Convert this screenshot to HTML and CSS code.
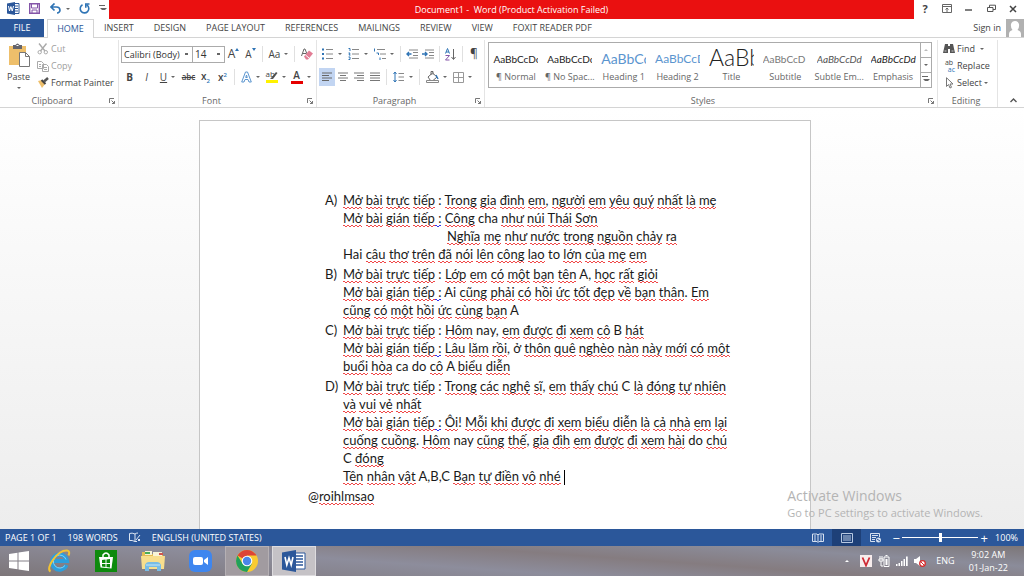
FILE: index.html
```html
<!DOCTYPE html>
<html lang="en">
<head>
    <meta charset="UTF-8">
    <meta name="viewport" content="width=device-width, initial-scale=1.0">
    <title>Document1 - Word</title>
    <link rel="stylesheet" href="styles.css">
</head>
<body>
    <header class="titlebar">
        <div class="quick-access">
            <svg class="app-logo" width="13" height="13" viewBox="0 0 13 13"><path d="M7 1.500h5v10H7z" fill="#fff" stroke="#2b579a"/><path d="M8 4h3M8 6.500h3M8 9h3" stroke="#2b579a"/><path d="M0 1.500 8 0v13L0 11.500z" fill="#2b579a"/><path d="m1.500 4 1 5 1.400-4.500L5.200 9l1.300-5" fill="none" stroke="#fff"/></svg>
            <button aria-label="Save"><svg width="11" height="11" viewBox="0 0 11 11"><path d="M.7.700h9.600v9.600H.7z" fill="#fff" stroke="#8455a8" stroke-width="1.400"/><path d="M2.500 1v4h6V1M3 10V7h5v3" fill="none" stroke="#8455a8"/></svg></button>
            <button class="split" aria-label="Undo"><svg width="12" height="11" viewBox="0 0 12 11"><path d="M4.500.500 1 4l3.500 3.500M1 4h5.500C11 4 11 10 7 10" fill="none" stroke="#2f74b5" stroke-width="1.700"/></svg><i class="caret"></i></button>
            <button aria-label="Redo"><svg width="11" height="11" viewBox="0 0 11 11"><path d="M3.500 1.800a4.300 4.300 0 1 0 4.500.300M10.500 1H6.800v3.800" fill="none" stroke="#2f74b5" stroke-width="1.600"/></svg></button>
            <button class="more" aria-label="Customize toolbar"><i class="caret over"></i></button>
        </div>
        <h1>Document1 -&nbsp; Word (Product Activation Failed)</h1>
        <div class="window-buttons">
            <button aria-label="Help"><b>?</b></button>
            <button aria-label="Ribbon display options"><svg width="10" height="9" viewBox="0 0 10 9"><path d="M.500.500h9v8h-9zM.500 2.500h9M5 8V4M3.500 5.500 5 4l1.500 1.500" fill="none" stroke="#666"/></svg></button>
            <button aria-label="Minimize"><svg width="8" height="8" viewBox="0 0 8 8"><path d="M0 5h7" stroke="#555" stroke-width="1.500"/></svg></button>
            <button aria-label="Restore"><svg width="9" height="9" viewBox="0 0 9 9"><path d="M.500 3.500h5.500v4H.500zM2.500 3V1.200h6v4.300H6" fill="none" stroke="#555"/></svg></button>
            <button aria-label="Close"><svg width="8" height="8" viewBox="0 0 8 8"><path d="m1 1 6 6M7 1 1 7" stroke="#444" stroke-width="1.500"/></svg></button>
        </div>
    </header>

    <nav class="tabs">
        <a class="file" href="#file">FILE</a>
        <a class="active" href="#home">HOME</a>
        <a href="#insert">INSERT</a>
        <a href="#design">DESIGN</a>
        <a href="#layout">PAGE LAYOUT</a>
        <a href="#references">REFERENCES</a>
        <a href="#mailings">MAILINGS</a>
        <a href="#review">REVIEW</a>
        <a href="#view">VIEW</a>
        <a href="#foxit">FOXIT READER PDF</a>
        <a class="sign-in" href="#signin">Sign in <svg width="18" height="18" viewBox="0 0 18 18"><path d="M0 0h18v18H0z" fill="#b1b1b1"/><path d="M3 18v-3q0-3 3.500-4Q4.500 9 5 5q1-3 4-3t4 3q.500 4-1.500 6 3.500 1 3.500 4v3z" fill="#fff"/></svg></a>
    </nav>

    <section class="ribbon">
        <div class="group clipboard">
            <div class="tools">
                <button class="paste">
                    <svg width="22" height="24" viewBox="0 0 22 24"><path d="M1 3h17v19H1z" fill="#eebf6b"/><path d="M5 2h2.500Q9.500-1 11.500 2H14v4H5z" fill="#64646c"/><path d="M8.500 2.500h2" stroke="#fff"/><path d="M11.500 9.500h6l4 4v10h-10z" fill="#fff" stroke="#777"/><path d="M17.500 9.500v4h4" fill="none" stroke="#777"/></svg>
                    Paste
                    <i class="caret"></i>
                </button>
                <div class="stack">
                    <button class="off"><svg width="12" height="12" viewBox="0 0 12 12"><path d="M2 .500 8 8M9.500.500 3.500 8" stroke="#aaa" stroke-width="1.400"/><circle cx="2.700" cy="9.200" r="1.700" fill="none" stroke="#aaa"/><circle cx="8.800" cy="9.200" r="1.700" fill="none" stroke="#aaa"/></svg>Cut</button>
                    <button class="off"><svg width="12" height="12" viewBox="0 0 12 12"><path d="M.500 1.500h4l2 2v5h-6zM5.500 4.500h4l2 2v5h-6z" fill="#fff" stroke="#aaa"/><path d="M2 4.500h2M2 6.500h2M7 7.500h3M7 9.500h3" stroke="#aaa"/></svg>Copy</button>
                    <button><svg width="12" height="12" viewBox="0 0 12 12"><path d="m1 4 4-1 3 4-3 4z" fill="#eebf6b"/><path d="m4.500 3 4 4" stroke="#444" stroke-width="2"/><path d="m7 4.500 4-3.500" stroke="#555" stroke-width="2.500"/></svg>Format Painter</button>
                </div>
            </div>
            <h2>Clipboard</h2>
            <button class="launcher" aria-label="Clipboard options"><svg width="6" height="6" viewBox="0 0 6 6"><path d="M.500 5V.500H5M2.500 2.500l3 3M5.500 3v2.500H3" fill="none" stroke="#777"/></svg></button>
        </div>

        <div class="group font">
            <div class="tools rows">
                <div class="row">
                    <select class="family" aria-label="Font"><option>Calibri (Body)</option></select>
                    <select class="size" aria-label="Font size"><option>14</option></select>
                    <button class="grow" aria-label="Grow font">A<svg width="4" height="3" viewBox="0 0 4 3"><path d="m0 3 2-3 2 3z" fill="#2f74b5"/></svg></button>
                    <button class="shrink" aria-label="Shrink font">A<svg width="4" height="3" viewBox="0 0 4 3"><path d="m0 0 2 3 2-3z" fill="#2f74b5"/></svg></button>
                    <hr>
                    <button class="split case">Aa<i class="caret"></i></button>
                    <hr>
                    <button aria-label="Clear formatting"><svg width="12" height="12" viewBox="0 0 12 12"><path d="M.500 8 3 1h1l2 5M1.500 5.500H5" fill="none" stroke="#666"/><path d="m3 8.500 5-6 4 3-5 6H5z" fill="#e27d95"/><path d="m4.500 7 3.500 3" stroke="#fff"/></svg></button>
                </div>
                <div class="row">
                    <button><b>B</b></button>
                    <button><em>I</em></button>
                    <button class="split"><ins>U</ins><i class="caret"></i></button>
                    <button><s>abc</s></button>
                    <button class="script"><span>x<sub>2</sub></span></button>
                    <button class="script"><span>x<sup>2</sup></span></button>
                    <hr>
                    <button class="split" aria-label="Text effects"><svg width="11" height="12" viewBox="0 0 11 12"><path d="M.700 11 4.500 1h2l3.800 10H8L7 8.500H4L3 11zM4.700 6.500h1.600L5.500 4z" fill="#fff" stroke="#5b95cf"/></svg><i class="caret"></i></button>
                    <button class="split" aria-label="Highlight"><span class="highlight"><svg width="12" height="12" viewBox="0 0 12 12"><path d="M0 9h12v3H0z" fill="#fff200"/><path d="m5 7 5-6 1.500 1L7 8H4z" fill="#555"/></svg><small>ab</small></span><i class="caret"></i></button>
                    <button class="split" aria-label="Font color"><span class="font-color">A</span><i class="caret"></i></button>
                </div>
            </div>
            <h2>Font</h2>
            <button class="launcher" aria-label="Font options"><svg width="6" height="6" viewBox="0 0 6 6"><path d="M.500 5V.500H5M2.500 2.500l3 3M5.500 3v2.500H3" fill="none" stroke="#777"/></svg></button>
        </div>

        <div class="group paragraph">
            <div class="tools rows">
                <div class="row">
                    <button class="split" aria-label="Bullets"><svg width="12" height="12" viewBox="0 0 12 12"><path d="M0 1.500h2M0 6h2M0 10.500h2" stroke="#2f74b5" stroke-width="2"/><path d="M4 1.500h7M4 6h7M4 10.500h7" stroke="#888"/></svg><i class="caret"></i></button>
                    <button class="split" aria-label="Numbering"><svg width="12" height="12" viewBox="0 0 12 12"><path d="M.500.500H2v2.500M.500 5H2l-1 2h1.500M.500 9H2v2.500H.500" fill="none" stroke="#2f74b5"/><path d="M4 1.500h7M4 6h7M4 10.500h7" stroke="#888"/></svg><i class="caret"></i></button>
                    <button class="split" aria-label="Multilevel list"><svg width="12" height="12" viewBox="0 0 12 12"><path d="M.500.500v3M2.500 5h2v2M6 9.500v2.500" fill="none" stroke="#2f74b5"/><path d="M3 1.500h8M6 6h6M8 10.500h4" stroke="#888"/></svg><i class="caret"></i></button>
                    <hr>
                    <button aria-label="Decrease indent"><svg width="12" height="10" viewBox="0 0 12 10"><path d="M3 1h9M7 3.500h5M7 6.500h5M3 9h9" stroke="#888"/><path d="M5.500 5H1M3 3 1 5l2 2" fill="none" stroke="#2f74b5" stroke-width="1.400"/></svg></button>
                    <button aria-label="Increase indent"><svg width="12" height="10" viewBox="0 0 12 10"><path d="M3 1h9M7 3.500h5M7 6.500h5M3 9h9" stroke="#888"/><path d="M0 5h5M3 3l2 2-2 2" fill="none" stroke="#2f74b5" stroke-width="1.400"/></svg></button>
                    <hr>
                    <button aria-label="Sort"><svg width="12" height="13" viewBox="0 0 12 13"><path d="M.500 5.500 2.500.500l2 5M1 4h3" fill="none" stroke="#2f74b5"/><path d="M.500 7.500h4l-4 4.500h4" fill="none" stroke="#8455a8"/><path d="M8.500 1v10M6.500 9l2 2.500 2-2.500" fill="none" stroke="#666"/></svg></button>
                    <hr>
                    <button class="pilcrow" aria-label="Show marks">¶</button>
                </div>
                <div class="row">
                    <button class="pressed" aria-label="Align left"><svg width="12" height="10" viewBox="0 0 12 10"><path d="M1 1h10M1 3.500h7M1 6h10M1 8.500h7" stroke="#666"/></svg></button>
                    <button aria-label="Center"><svg width="12" height="10" viewBox="0 0 12 10"><path d="M1 1h10M3 3.500h6M1 6h10M3 8.500h6" stroke="#777"/></svg></button>
                    <button aria-label="Align right"><svg width="12" height="10" viewBox="0 0 12 10"><path d="M1 1h10M4 3.500h7M1 6h10M4 8.500h7" stroke="#777"/></svg></button>
                    <button aria-label="Justify"><svg width="12" height="10" viewBox="0 0 12 10"><path d="M1 1h10M1 3.500h10M1 6h10M1 8.500h10" stroke="#777"/></svg></button>
                    <hr>
                    <button class="split" aria-label="Line spacing"><svg width="12" height="12" viewBox="0 0 12 12"><path d="M2 1v10M.500 3 2 1l1.500 2M.500 9 2 11l1.500-2" fill="none" stroke="#2f74b5"/><path d="M5.500 2.500H11M5.500 6H11M5.500 9.500H11" stroke="#888"/></svg><i class="caret"></i></button>
                    <hr>
                    <button class="split" aria-label="Shading"><svg width="13" height="12" viewBox="0 0 13 12"><path d="m2 6 4.500-4L11 6l-4 3.500H4.500zM5 4V.500h2v3" fill="#fff" stroke="#666"/><path d="m10 4 2 4" stroke="#2f74b5" stroke-width="1.400"/><path d="M.500 9.500h12v2H.500z" fill="#fff" stroke="#888"/></svg><i class="caret"></i></button>
                    <button class="split" aria-label="Borders"><svg width="11" height="11" viewBox="0 0 11 11"><path d="M.500.500h10v10H.500zM5.500 1v9M1 5.500h9" fill="none" stroke="#999"/></svg><i class="caret"></i></button>
                </div>
            </div>
            <h2>Paragraph</h2>
            <button class="launcher" aria-label="Paragraph options"><svg width="6" height="6" viewBox="0 0 6 6"><path d="M.500 5V.500H5M2.500 2.500l3 3M5.500 3v2.500H3" fill="none" stroke="#777"/></svg></button>
        </div>

        <div class="group styles">
            <div class="tools">
                <div class="gallery">
                    <button><span class="sample">AaBbCcDc</span>¶ Normal</button>
                    <button><span class="sample">AaBbCcDc</span>¶ No Spac...</button>
                    <button><span class="sample heading1">AaBbCc</span>Heading 1</button>
                    <button><span class="sample heading2">AaBbCcD</span>Heading 2</button>
                    <button><span class="sample title">AaBb</span>Title</button>
                    <button><span class="sample subtitle">AaBbCcD</span>Subtitle</button>
                    <button><span class="sample subtle">AaBbCcDd</span>Subtle Em...</button>
                    <button><span class="sample emphasis">AaBbCcDd</span>Emphasis</button>
                    <div class="scroller">
                        <button aria-label="Previous row" disabled><i class="caret up"></i></button>
                        <button aria-label="Next row"><i class="caret"></i></button>
                        <button aria-label="More styles"><i class="caret over"></i></button>
                    </div>
                </div>
            </div>
            <h2>Styles</h2>
            <button class="launcher" aria-label="Style options"><svg width="6" height="6" viewBox="0 0 6 6"><path d="M.500 5V.500H5M2.500 2.500l3 3M5.500 3v2.500H3" fill="none" stroke="#777"/></svg></button>
        </div>

        <div class="group editing">
            <div class="tools">
                <div class="stack">
                    <button><svg width="12" height="11" viewBox="0 0 12 11"><path d="M2 1h3v2h2V1h3l2 9H7V6H5v4H0z" fill="#555"/><path d="M1.500 8h2M8.500 8h2" stroke="#ccc"/></svg>Find <i class="caret far"></i></button>
                    <button><span class="swap"><small>ab</small><small>ac</small></span>Replace</button>
                    <button><svg width="12" height="12" viewBox="0 0 12 12"><path d="M3.500.700v8.800l2-2L7 11l1.500-.700L7 7h3z" fill="#fff" stroke="#777"/></svg>Select<i class="caret"></i></button>
                </div>
            </div>
            <h2>Editing</h2>
        </div>
        <button class="collapse" aria-label="Collapse the ribbon"><svg width="7" height="5" viewBox="0 0 7 5"><path d="m.500 4 3-3 3 3" fill="none" stroke="#555" stroke-width="1.400"/></svg></button>
    </section>

    <main class="workspace">
        <article class="page" lang="vi">
            <ol>
                <li>
                    <span class="letter">A)</span>
                    <div>
                        <p><u>Mở</u> <u>bài</u> <u>trực</u> <u>tiếp</u> : <u>Trong</u> <u>gia</u> <u>đình</u> <u>em</u>, <u>người</u> <u>em</u> <u>yêu</u> <u>quý</u> <u>nhất</u> <u>là</u> <u>mẹ</u></p>
                        <p><u>Mở</u> <u>bài</u> <u>gián</u> <u>tiếp</u><u class="grammar"> :</u> <u>Công</u> cha <u>như</u> <u>núi</u> <u>Thái</u> <u>Sơn</u></p>
                        <p class="verse"><u>Nghĩa</u> <u>mẹ</u> <u>như</u> <u>nước</u> <u>trong</u> <u>nguồn</u> <u>chảy</u> <u>ra</u></p>
                        <p>Hai <u>câu</u> <u>thơ</u> <u>trên</u> <u>đã</u> <u>nói</u> <u>lên</u> <u>công</u> <u>lao</u> to <u>lớn</u> <u>của</u> <u>mẹ</u> <u>em</u></p>
                    </div>
                </li>
                <li>
                    <span class="letter">B)</span>
                    <div>
                        <p><u>Mở</u> <u>bài</u> <u>trực</u> <u>tiếp</u> : <u>Lớp</u> <u>em</u> <u>có</u> <u>một</u> <u>bạn</u> <u>tên</u> A, <u>học</u> <u>rất</u> <u>giỏi</u></p>
                        <p><u>Mở</u> <u>bài</u> <u>gián</u> <u>tiếp</u><u class="grammar"> :</u> Ai <u>cũng</u> <u>phải</u> <u>có</u> <u>hồi</u> <u>ức</u> <u>tốt</u> <u>đẹp</u> <u>về</u> <u>bạn</u> <u>thân</u>. <u>Em</u><br>
                        <u>cũng</u> <u>có</u> <u>một</u> <u>hồi</u> <u>ức</u> <u>cùng</u> <u>bạn</u> A</p>
                    </div>
                </li>
                <li>
                    <span class="letter">C)</span>
                    <div>
                        <p><u>Mở</u> <u>bài</u> <u>trực</u> <u>tiếp</u> : <u>Hôm</u> nay, <u>em</u> <u>được</u> <u>đi</u> <u>xem</u> <u>cô</u> B <u>hát</u></p>
                        <p><u>Mở</u> <u>bài</u> <u>gián</u> <u>tiếp</u><u class="grammar"> :</u> <u>Lâu</u> <u>lăm</u> <u>rồi</u>, ở <u>thôn</u> <u>quê</u> <u>nghèo</u> <u>nàn</u> <u>này</u> <u>mới</u> <u>có</u> <u>một</u><br>
                        <u>buổi</u> <u>hòa</u> ca do <u>cô</u> A <u>biểu</u> <u>diễn</u></p>
                    </div>
                </li>
                <li>
                    <span class="letter">D)</span>
                    <div>
                        <p><u>Mở</u> <u>bài</u> <u>trực</u> <u>tiếp</u> : <u>Trong</u> <u>các</u> <u>nghệ</u> <u>sĩ</u>, <u>em</u> <u>thấy</u> <u>chú</u> C <u>là</u> <u>đóng</u> <u>tự</u> <u>nhiên</u><br>
                        <u>và</u> <u>vui</u> <u>vẻ</u> <u>nhất</u></p>
                        <p><u>Mở</u> <u>bài</u> <u>gián</u> <u>tiếp</u><u class="grammar"> :</u> <u>Ôi</u>! <u>Mỗi</u> <u>khi</u> <u>được</u> <u>đi</u> <u>xem</u> <u>biểu</u> <u>diễn</u> <u>là</u> <u>cả</u> <u>nhà</u> <u>em</u> <u>lại</u><br>
                        <u>cuống</u> <u>cuồng</u>. <u>Hôm</u> nay <u>cũng</u> <u>thế</u>, <u>gia</u> <u>đìh</u> <u>em</u> <u>được</u> <u>đi</u> <u>xem</u> <u>hài</u> do <u>chú</u><br>
                        C <u>đóng</u></p>
                        <p><u>Tên</u> <u>nhân</u> <u>vật</u> A,B,C <u>Bạn</u> <u>tự</u> <u>điền</u> <u>vô</u> <u>nhé</u> <span class="cursor"></span></p>
                    </div>
                </li>
            </ol>
            <p>@<u>roihlmsao</u></p>
        </article>
        <div class="watermark">
            <strong>Activate Windows</strong>
            <span>Go to PC settings to activate Windows.</span>
        </div>
    </main>

    <div class="statusbar">
        <span>PAGE 1 OF 1</span>
        <span>198 WORDS</span>
        <svg width="12" height="11" viewBox="0 0 12 11"><path d="M6 2Q3 .500.500 1.500v7Q3 8 6 9.500zM6 2q1-1 3-1M6 9.500h2" fill="none" stroke="#dde6f3"/><path d="m7 8 4-5M9 7l2 2M11 7 9 9" stroke="#dde6f3"/></svg>
        <span>ENGLISH (UNITED STATES)</span>
        <div class="views">
            <button aria-label="Read mode"><svg width="12" height="10" viewBox="0 0 12 10"><path d="M.500 1H5l1 1 1-1h4.500v7.500H7l-1 1-1-1H.500zM6 2v7M2 3h2M2 5h2M2 7h2M8 3h2M8 5h2M8 7h2" fill="none" stroke="#d5e0f0"/></svg></button>
            <button class="current" aria-label="Print layout"><svg width="12" height="10" viewBox="0 0 12 10"><path d="M.500.500h11v9H.500zM2 3h8M2 5h8M2 7h8" fill="none" stroke="#b8c9e3"/></svg></button>
            <button aria-label="Web layout"><svg width="12" height="10" viewBox="0 0 12 10"><path d="M5 8.500H.500v-8h9V4M2 2.500h6M2 4.500h4M2 6.500h3" fill="none" stroke="#d5e0f0"/><circle cx="8.500" cy="7" r="2.500" fill="#d5e0f0"/><path d="m7 6 3 2" stroke="#2b579a"/></svg></button>
        </div>
        <div class="zoom">
            <button aria-label="Zoom out">−</button>
            <input type="range" min="0" max="100" value="50" aria-label="Zoom">
            <button aria-label="Zoom in">+</button>
        </div>
        <span>100%</span>
    </div>

    <footer class="taskbar">
        <button class="start" aria-label="Start"><svg width="20" height="20" viewBox="0 0 20 20"><path d="m0 3 8.500-1.200v7.700H0zM9.500 1.600 20 0v9.500H9.500zM0 10.500h8.500v7.700L0 17zM9.500 10.500H20V20L9.500 18.400z" fill="#fff"/></svg></button>
        <button aria-label="Internet Explorer"><svg width="24" height="24" viewBox="0 0 24 24"><path d="M19.500 16A7.500 7.500 0 1 1 20 12H6" fill="none" stroke="#2d9fdd" stroke-width="4"/><path d="M18 16.500A6.500 6.500 0 1 1 19 10.500" fill="none" stroke="#83d4f7"/><path d="M3.500 22.500C-2 20 10 1 20 1.500q3.500.500 1.500 5" fill="none" stroke="#f2c335" stroke-width="2"/></svg></button>
        <button aria-label="Store"><svg width="22" height="22" viewBox="0 0 22 22"><path d="M0 0h22v22H0z" fill="#0d8a0d"/><path d="M4 7h14l-1.500 11.500-11-1z" fill="#fff"/><path d="M8 8V5q3-4 6 0v3" fill="none" stroke="#fff" stroke-width="1.500"/><path d="m7 10 3.500-.500V13H7zM11.500 9.400 15 9v4h-3.500zM7 14h3.500v3L7 16.500zM11.500 14H15v3.500l-3.500-.400z" fill="#0d8a0d"/></svg></button>
        <button aria-label="File Explorer"><svg width="24" height="22" viewBox="0 0 24 22"><path d="M1 2h8l1 2h12v15H1z" fill="#e4bd55"/><path d="M4 1h7v4H4zM12 2h9v4h-9z" fill="#f7f4d8"/><path d="M4 3h5" stroke="#4bad57" stroke-width="2"/><path d="M18 4h4" stroke="#d3554d" stroke-width="2"/><path d="M0 6h24l-1 13H1z" fill="#f8de8d"/><path d="M4 21v-6q1-3 4-3h8q3 0 4 3v6h-4v-4H8v4z" fill="#79bce5"/><path d="M5 15h14" stroke="#c5e8fa"/></svg></button>
        <button aria-label="Zoom meetings"><svg width="23" height="22" viewBox="0 0 23 22"><rect width="23" height="22" rx="6" fill="#3e86ef"/><rect x="4" y="7" width="10" height="8" rx="2" fill="#fff"/><path d="m15 10 4-3v8l-4-3z" fill="#fff"/></svg></button>
        <button class="open" aria-label="Chrome"><svg width="22" height="22" viewBox="0 0 22 22"><circle cx="11" cy="11" r="11" fill="#f9cb31"/><path d="M11 11 1.500 5.500A11 11 0 0 1 20.500 5.500H11z" fill="#dd4437"/><path d="M1.500 5.500A11 11 0 0 0 11 22l5-8.500H6.500z" fill="#21a05c"/><circle cx="11" cy="11" r="5.300" fill="#fff"/><circle cx="11" cy="11" r="4.200" fill="#4a86e8"/></svg></button>
        <button class="open focused" aria-label="Word"><svg width="24" height="22" viewBox="0 0 24 22"><path d="M12 3h11v16H12z" fill="#fff" stroke="#2b579a"/><path d="M14 6h7M14 9h7M14 12h7M14 15h7" stroke="#2b579a" stroke-width="1.400"/><path d="M0 2.500 14 0v22L0 19.500z" fill="#2b579a"/><path d="m3 7 1.800 8L7 8l2.200 7L11 7" fill="none" stroke="#fff" stroke-width="1.600"/></svg></button>
        <div class="tray">
            <i class="caret up"></i>
            <svg width="12" height="12" viewBox="0 0 12 12"><path d="M0 0h12v12H0z" fill="#f7eded"/><path d="m2.500 2.500 3.500 8 3.500-8" fill="none" stroke="#cf2a35" stroke-width="1.800"/></svg>
            <svg width="12" height="12" viewBox="0 0 12 12"><path d="M6 2h5v9.500H6zM7.500.500h2M2 1v3M4 1v3M1 4h4v2H1zM3 6v5h2" fill="none" stroke="#fff"/><path d="M7.500 4h2v6h-2z" fill="#fff"/></svg>
            <svg width="12" height="12" viewBox="0 0 12 12"><path d="M0 11V9h1.500v2zM2.500 11V8H4v3zM5 11V6h1.500v5zM7.500 11V4H9v7zM10 11V1.500h1.700V11z" fill="#fff"/></svg>
            <svg width="12" height="12" viewBox="0 0 12 12"><path d="M0 4h2l4-3v10L2 8H0z" fill="#fff"/><circle cx="8.500" cy="8.500" r="2.800" fill="#fff" stroke="#d82b2b" stroke-width="1.300"/><path d="m6.700 6.700 3.600 3.600" stroke="#d82b2b"/></svg>
            <span class="lang">ENG</span>
            <time>9:02 AM<br>01-Jan-22</time>
        </div>
    </footer>
</body>
</html>
```
FILE: styles.css
```css
:root {
    --word-blue: #2b579a;
    --text: #444444;
    --line: #d4d4d4;
    --squiggle: #f04848;
}

* {
    margin: 0;
    padding: 0;
    box-sizing: border-box;
}

body {
    display: flex;
    flex-direction: column;
    height: 100vh;
    overflow: hidden;
    background: #ffffff;
    color: var(--text);
    font: 9px/12px "Open Sans", "Noto Sans", sans-serif;
}

button {
    display: flex;
    align-items: center;
    justify-content: center;
    background: none;
    border: none;
    color: inherit;
    font: inherit;
    white-space: nowrap;
}

a {
    color: inherit;
    text-decoration: none;
}

svg {
    flex: none;
}

.caret {
    flex: none;
    border: 2px solid transparent;
    border-top-color: #666666;
    border-bottom: 0;
}

.caret.up {
    border-top: 0;
    border-bottom: 2px solid #bbbbbb;
}

.caret.over::before {
    content: "";
    display: block;
    width: 6px;
    margin: -5px 0 4px -3px;
    border-top: 1px solid #666666;
}

/* Title bar */
.titlebar {
    display: flex;
    flex: none;
    height: 19px;
}

.quick-access {
    display: flex;
    align-items: center;
    width: 109px;
    padding: 0 2px 2px 7px;
}

.quick-access .app-logo {
    margin-right: 9px;
}

.quick-access .split {
    width: 30px;
    gap: 4px;
    margin: 0 8px;
}

.quick-access .more {
    margin-left: 10px;
}

.titlebar h1 {
    flex: 1;
    background: #ea1010;
    color: #ffffff;
    font-size: 9px;
    font-weight: 400;
    line-height: 19px;
    text-align: center;
}

.window-buttons {
    display: flex;
    align-items: center;
    width: 110px;
    padding-bottom: 2px;
}

.window-buttons button {
    width: 22px;
    font-size: 11px;
}

/* Ribbon tabs */
.tabs {
    display: flex;
    flex: none;
    height: 19px;
    border-bottom: 1px solid var(--line);
    line-height: 18px;
}

.tabs a {
    padding: 0 10px;
    white-space: nowrap;
}

.tabs .file {
    width: 44px;
    margin-right: 3px;
    padding: 0;
    background: var(--word-blue);
    color: #ffffff;
    text-align: center;
}

.tabs .active {
    width: 47px;
    height: 19px;
    padding: 0;
    background: #ffffff;
    border: 1px solid var(--line);
    border-bottom: 0;
    color: var(--word-blue);
    line-height: 17px;
    text-align: center;
}

.tabs .sign-in {
    display: flex;
    gap: 5px;
    margin-left: auto;
    padding: 0;
}

/* Ribbon */
.ribbon {
    display: flex;
    flex: none;
    height: 70px;
    border-bottom: 1px solid var(--line);
}

.group {
    position: relative;
    display: flex;
    flex-direction: column;
    flex: none;
    margin-top: 2px;
    border-right: 1px solid #e4e4e4;
}

.group h2 {
    padding-right: 14px;
    color: #666666;
    font-size: 9px;
    font-weight: 400;
    text-align: center;
}

.launcher {
    position: absolute;
    right: 3px;
    bottom: 3px;
}

.tools {
    display: flex;
    flex: 1;
}

.stack button {
    justify-content: flex-start;
    gap: 2px;
    height: 17px;
}

.stack .off {
    color: #a0a0a0;
}

.clipboard {
    width: 119px;
}

.editing {
    width: 60px;
    padding-left: 5px;
}

.group.editing h2 {
    padding-right: 8px;
}

.font {
    width: 198px;
    padding-left: 2px;
}

.paragraph {
    width: 168px;
    padding-left: 2px;
}

.styles {
    flex: 1;
    padding: 0 5px 0 3px;
}

.paste {
    flex-direction: column;
    justify-content: flex-start;
    width: 37px;
    padding-top: 3px;
    gap: 4px;
}

.rows {
    flex-direction: column;
    gap: 5px;
    padding-top: 5px;
}

.row {
    display: flex;
    align-items: center;
    height: 18px;
}

.row button {
    flex: none;
    width: 16px;
    height: 18px;
    font-size: 10px;
}

.row .split {
    gap: 4px;
    width: 26px;
}

.font .row button {
    width: 17px;
}

.font .row .split {
    width: 25px;
}

.row hr {
    height: 16px;
    margin: 0 3px;
    border: none;
    border-left: 1px solid #e0e0e0;
}

.row select {
    height: 17px;
    padding: 0 2px;
    appearance: none;
    background: linear-gradient(#666666, #666666) no-repeat right 4px center / 3px 2px #ffffff;
    border: 1px solid #ababab;
    color: #333333;
    font: 9px "Open Sans", "Noto Sans", sans-serif;
}

.row .family {
    width: 72px;
}

.row .size {
    width: 33px;
    font-size: 10px;
    margin-left: -1px;
}

.font .row .grow {
    font-size: 12px;
}

.grow svg,
.shrink svg {
    align-self: flex-start;
    margin-top: 3px;
}

.row s {
    font-size: 8px;
    font-weight: 600;
}

.script {
    font-weight: 600;
}

.script sub,
.script sup {
    color: #2f74b5;
    font-size: 6px;
    line-height: 6px;
}

.highlight {
    position: relative;
    height: 12px;
}

.highlight small {
    position: absolute;
    left: 0;
    top: -3px;
    font-size: 8px;
}

.font-color {
    width: 12px;
    height: 14px;
    border-bottom: 3px solid #e60000;
    font-weight: 600;
    line-height: 11px;
}

.row .pilcrow {
    font-size: 12px;
}

.row .pressed {
    background: #c2d5f2;
}

.gallery {
    display: flex;
    flex: 1;
    height: 46px;
    margin-top: 2px;
    border: 1px solid #ababab;
}

.gallery > button {
    flex: 1;
    flex-direction: column;
    justify-content: flex-start;
    min-width: 0;
    color: #666666;
}

.sample {
    width: 45px;
    height: 28px;
    overflow: hidden;
    color: #222222;
    font: 10px/32px Lato, "Open Sans", sans-serif;
    text-align: left;
}

.heading1 {
    color: #5b95cf;
    font-size: 14px;
}

.heading2 {
    color: #5b95cf;
    font-size: 12px;
}

.title {
    font-size: 23px;
    font-weight: 300;
    line-height: 28px;
}

.subtitle {
    color: #777777;
}

.subtle {
    color: #555555;
    font-style: italic;
}

.emphasis {
    font-style: italic;
}

.scroller {
    display: flex;
    flex-direction: column;
    width: 11px;
    border-left: 1px solid #ababab;
}

.scroller button {
    flex: 1;
}

.scroller button + button {
    border-top: 1px solid #ababab;
}

.swap {
    display: flex;
    flex-direction: column;
    width: 12px;
}

.swap small {
    font-size: 7px;
    line-height: 7px;
}

.swap small + small {
    color: #2f74b5;
    text-align: right;
}

.far {
    margin-left: 3px;
}

.collapse {
    width: 26px;
    margin: auto 0 4px;
    padding-left: 4px;
}

/* Document */
.workspace {
    position: relative;
    flex: 1;
    min-height: 0;
    padding: 12px 14px 0 0;
    overflow: hidden;
    background: linear-gradient(#ffffff, #ededed);
}

.page {
    width: 612px;
    max-width: 100%;
    min-height: 792px;
    margin: 0 auto;
    padding: 70px 70px 0 108px;
    background: #ffffff;
    border: 1px solid #c6c6c6;
    color: #1a1a1a;
    font: 13px/18px Lato, "Open Sans", sans-serif;
    font-variant-ligatures: none;
    white-space: nowrap;
}

.page ol {
    padding-left: 17px;
    list-style: none;
}

.page li {
    display: grid;
    grid-template-columns: 18px 1fr;
    padding-bottom: 2px;
}

/* Spelling squiggle: two rows of dashes, the lower one shifted */
.page u {
    padding-bottom: 1px;
    text-decoration: none;
    background:
        repeating-linear-gradient(90deg, var(--squiggle) 0 2px, transparent 2px 4px) 0 calc(100% - 1px) / 100% 1px no-repeat,
        repeating-linear-gradient(90deg, transparent 0 2px, var(--squiggle) 2px 4px) 0 100% / 100% 1px no-repeat;
}

.page .grammar {
    --squiggle: #3333ee;
}

.verse {
    padding-left: 104px;
}

.cursor {
    display: inline-block;
    height: 15px;
    border-left: 1px solid #000000;
    vertical-align: middle;
}

.watermark {
    position: absolute;
    right: 41px;
    bottom: 8px;
    color: #b4b4b4;
    font-size: 11px;
    line-height: 16px;
}

.watermark strong {
    display: block;
    font-size: 14px;
    font-weight: 400;
    line-height: 18px;
}

/* Status bar */
.statusbar {
    display: flex;
    align-items: center;
    flex: none;
    gap: 11px;
    height: 17px;
    padding: 0 6px 0 5px;
    background: var(--word-blue);
    color: #ffffff;
}

.views {
    display: flex;
    height: 100%;
    margin-left: auto;
}

.views button {
    width: 29px;
}

.views .current {
    background: #1e4078;
}

.zoom {
    display: flex;
    align-items: center;
    gap: 2px;
    margin: 0 -4px 0 -9px;
}

.zoom button {
    width: 8px;
    font-size: 13px;
}

.zoom input {
    width: 76px;
    height: 9px;
    appearance: none;
    background: linear-gradient(#ffffff, #ffffff) no-repeat center / 100% 1px;
}

.zoom input::-webkit-slider-thumb {
    width: 3px;
    height: 9px;
    appearance: none;
    background: #ffffff;
}

/* Taskbar */
.taskbar {
    display: flex;
    flex: none;
    height: 30px;
    background: linear-gradient(4deg, #7d7679, #8d8d9c 40%, #857c80 60%, #8b8c9a 80%, #7c7678);
    color: #ffffff;
}

.taskbar button {
    width: 44px;
    margin-right: 3px;
}

.taskbar .start {
    width: 37px;
    margin-right: 0;
}

.taskbar .open {
    background: #a19ba0;
    border: 1px solid #b5b0b4;
}

.taskbar .focused {
    background: #c5c2c6;
    border-color: #dedcdf;
}

.tray {
    display: flex;
    align-items: center;
    gap: 6px;
    margin-left: auto;
    padding-right: 16px;
}

.tray .caret {
    margin-right: 5px;
    border-bottom-color: #ffffff;
}

.lang {
    margin: 0 8px 0 4px;
}

.tray time {
    line-height: 13px;
    text-align: center;
}
```
